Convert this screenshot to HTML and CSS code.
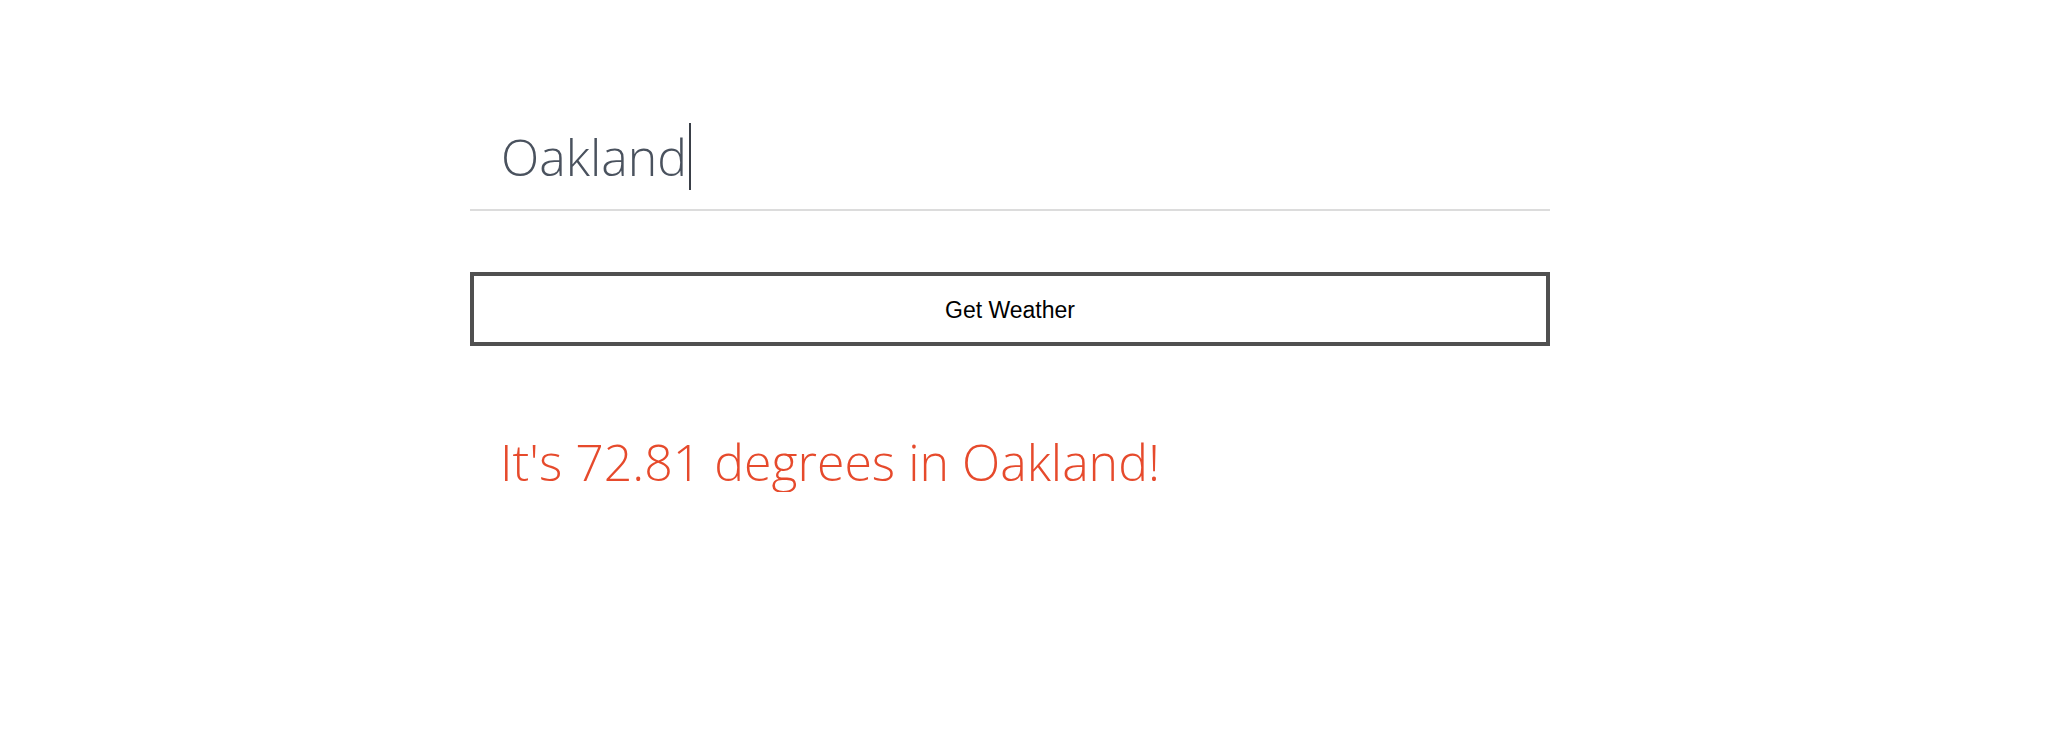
FILE: index.html
```html
<!DOCTYPE html>
<html>
<head>
<meta charset="utf-8">
<link rel="stylesheet" href="styles.css">
</head>
<body>
<main class="app">
  <div class="field">
    <span class="city">Oakland</span><span class="caret"></span>
  </div>
  <button class="btn">Get Weather</button>
  <p class="result">It's 72.81 degrees in Oakland!</p>
</main>
</body>
</html>
```
FILE: styles.css
```css
html, body {
  margin: 0;
  padding: 0;
  background: #ffffff;
}
.app {
  width: 1080px;
  margin-left: 470px;
  padding-top: 112px;
  display: flex;
  flex-direction: column;
}
.field {
  display: flex;
  align-items: center;
  height: 99px;
  padding-left: 31px;
  padding-bottom: 8px;
  border-bottom: 2px solid #dcdcdc;
  box-sizing: border-box;
  font-family: "Open Sans", sans-serif;
  font-weight: 300;
  font-size: 50px;
  color: #4a525e;
}
.city {
  line-height: 1;
}
.caret {
  display: inline-block;
  width: 2px;
  height: 67px;
  background: #3a3f48;
  margin-left: 2px;
}
.btn {
  margin-top: 61px;
  height: 74px;
  border: 4px solid #505050;
  background: #ffffff;
  font-family: "Liberation Sans", Arial, sans-serif;
  font-size: 23px;
  color: #000000;
  padding: 2px 0 0 0;
}
.result {
  margin: 86px 0 0 0;
  padding-left: 30px;
  font-family: "Open Sans", sans-serif;
  font-weight: 300;
  font-size: 50px;
  line-height: 1.2;
  color: #e64a2c;
}
```
